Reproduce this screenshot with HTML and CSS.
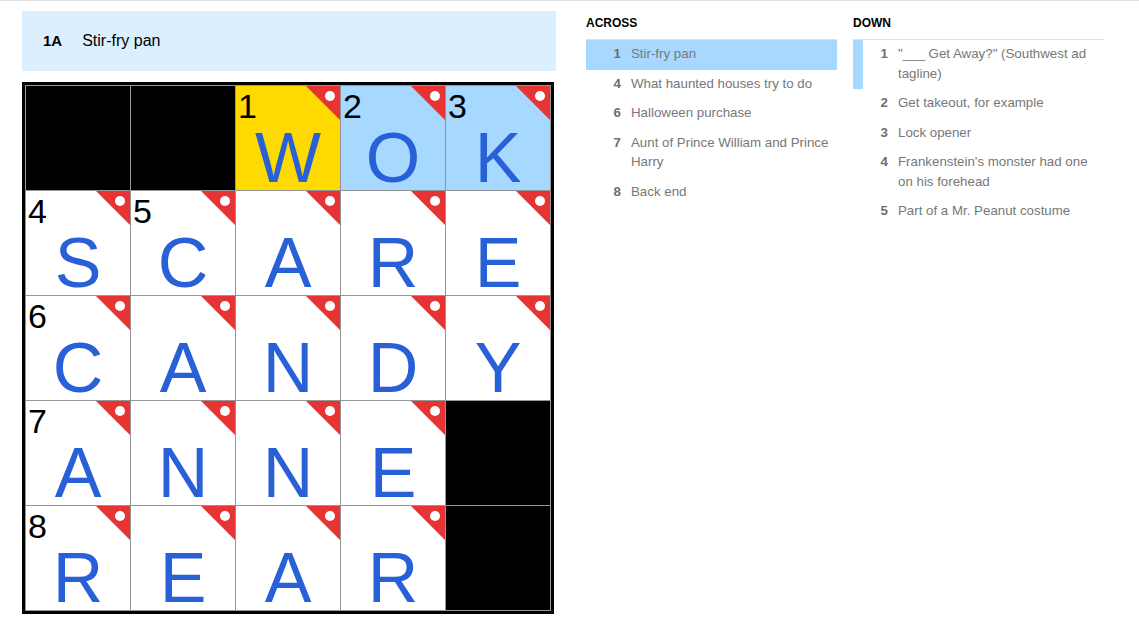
FILE: index.html
```html
<!DOCTYPE html>
<html>
<head>
<meta charset="utf-8">
<link rel="stylesheet" href="styles.css">
</head>
<body>
<div class="page">
  <div class="board">
    <div class="clue-bar">
      <span class="clue-bar-num">1A</span>
      <span class="clue-bar-text">Stir-fry pan</span>
    </div>
    <div class="grid-wrap">
      <div class="grid">
        <div class="cell black"></div>
        <div class="cell black"></div>
        <div class="cell selected"><span class="num">1</span><span class="flag"></span><span class="letter">W</span></div>
        <div class="cell word"><span class="num">2</span><span class="flag"></span><span class="letter">O</span></div>
        <div class="cell word"><span class="num">3</span><span class="flag"></span><span class="letter">K</span></div>

        <div class="cell"><span class="num">4</span><span class="flag"></span><span class="letter">S</span></div>
        <div class="cell"><span class="num">5</span><span class="flag"></span><span class="letter">C</span></div>
        <div class="cell"><span class="flag"></span><span class="letter">A</span></div>
        <div class="cell"><span class="flag"></span><span class="letter">R</span></div>
        <div class="cell"><span class="flag"></span><span class="letter">E</span></div>

        <div class="cell"><span class="num">6</span><span class="flag"></span><span class="letter">C</span></div>
        <div class="cell"><span class="flag"></span><span class="letter">A</span></div>
        <div class="cell"><span class="flag"></span><span class="letter">N</span></div>
        <div class="cell"><span class="flag"></span><span class="letter">D</span></div>
        <div class="cell"><span class="flag"></span><span class="letter">Y</span></div>

        <div class="cell"><span class="num">7</span><span class="flag"></span><span class="letter">A</span></div>
        <div class="cell"><span class="flag"></span><span class="letter">N</span></div>
        <div class="cell"><span class="flag"></span><span class="letter">N</span></div>
        <div class="cell"><span class="flag"></span><span class="letter">E</span></div>
        <div class="cell black"></div>

        <div class="cell"><span class="num">8</span><span class="flag"></span><span class="letter">R</span></div>
        <div class="cell"><span class="flag"></span><span class="letter">E</span></div>
        <div class="cell"><span class="flag"></span><span class="letter">A</span></div>
        <div class="cell"><span class="flag"></span><span class="letter">R</span></div>
        <div class="cell black"></div>
      </div>
    </div>
  </div>

  <div class="clue-lists">
    <section class="clue-list">
      <h3 class="list-title">Across</h3>
      <ol class="clues">
        <li class="clue active"><span class="clue-num">1</span><span class="clue-text">Stir-fry pan</span></li>
        <li class="clue"><span class="clue-num">4</span><span class="clue-text">What haunted houses try to do</span></li>
        <li class="clue"><span class="clue-num">6</span><span class="clue-text">Halloween purchase</span></li>
        <li class="clue"><span class="clue-num">7</span><span class="clue-text">Aunt of Prince William and Prince Harry</span></li>
        <li class="clue"><span class="clue-num">8</span><span class="clue-text">Back end</span></li>
      </ol>
    </section>
    <section class="clue-list">
      <h3 class="list-title">Down</h3>
      <ol class="clues">
        <li class="clue related"><span class="clue-num">1</span><span class="clue-text">"___ Get Away?" (Southwest ad tagline)</span></li>
        <li class="clue"><span class="clue-num">2</span><span class="clue-text">Get takeout, for example</span></li>
        <li class="clue"><span class="clue-num">3</span><span class="clue-text">Lock opener</span></li>
        <li class="clue"><span class="clue-num">4</span><span class="clue-text">Frankenstein's monster had one on his forehead</span></li>
        <li class="clue"><span class="clue-num">5</span><span class="clue-text">Part of a Mr. Peanut costume</span></li>
      </ol>
    </section>
  </div>
</div>
</body>
</html>
```

FILE: styles.css
```css
* { box-sizing: border-box; }

html, body {
  margin: 0;
  padding: 0;
  background: #fff;
}

body {
  border-top: 1px solid #e2e2e2;
  font-family: "Liberation Sans", Arial, sans-serif;
  color: #000;
}

.page {
  display: flex;
  align-items: flex-start;
  gap: 30px;
  padding: 10px 0 0 22px;
}

/* ---------- board ---------- */
.board {
  width: 534px;
  display: flex;
  flex-direction: column;
}

.clue-bar {
  height: 60px;
  background: #dcefff;
  display: flex;
  align-items: center;
  padding-left: 21px;
  padding-bottom: 1px;
  gap: 20px;
}

.clue-bar-num {
  font-weight: bold;
  font-size: 15px;
}

.clue-bar-text {
  font-size: 16px;
}

.grid-wrap {
  margin-top: 11px;
}

.grid {
  display: inline-grid;
  grid-template-columns: repeat(5, 104px);
  grid-auto-rows: 104px;
  gap: 1px;
  padding: 1px;
  background: #959595;
  border: 3px solid #000;
}

.cell {
  position: relative;
  background: #fff;
}

.cell.black { background: #000; }
.cell.selected { background: #ffda00; }
.cell.word { background: #a7d8ff; }

.num {
  position: absolute;
  top: 3px;
  left: 2px;
  font-size: 34px;
  line-height: 35px;
  color: #000;
}

.letter {
  display: block;
  padding-top: 42px;
  text-align: center;
  font-size: 70px;
  line-height: 60px;
  color: #2860d8;
}

.flag {
  position: absolute;
  top: 0;
  right: 0;
  width: 34px;
  height: 34px;
  background: #e63333;
  clip-path: polygon(0 0, 100% 0, 100% 100%);
}

.flag::after {
  content: "";
  position: absolute;
  top: 5px;
  right: 5px;
  width: 10px;
  height: 10px;
  border-radius: 50%;
  background: #fff;
}

/* ---------- clue lists ---------- */
.clue-lists {
  display: flex;
  gap: 16px;
  margin-top: -10px;
}

.clue-list {
  width: 251px;
}

.list-title {
  margin: 0;
  padding: 14px 0 8px;
  font-size: 12px;
  line-height: 16px;
  font-weight: bold;
  text-transform: uppercase;
  border-bottom: 1px solid #e0e0e0;
}

.clues {
  list-style: none;
  margin: 0;
  padding: 0;
}

.clue {
  display: flex;
  padding: 4px 0 6px;
  font-size: 13.3px;
  line-height: 19.5px;
  color: #777;
}

.clue.active {
  background: #a7d8ff;
}

.clue.related {
  box-shadow: inset 10px 0 0 #a7d8ff;
}

.clue-num {
  flex: 0 0 35px;
  text-align: right;
  font-weight: bold;
  margin-right: 10px;
  color: #6e6e6e;
}

.clue-text {
  flex: 1;
}
```
